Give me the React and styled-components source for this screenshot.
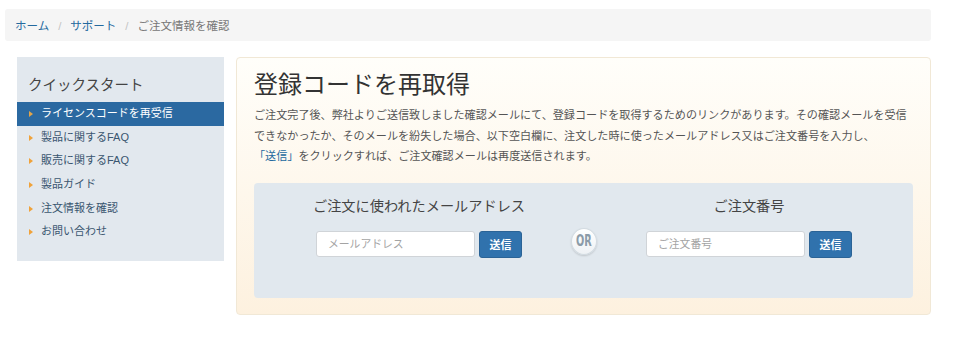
import styled, { createGlobalStyle } from 'styled-components';

const GlobalStyle = createGlobalStyle`
	body {
		margin: 0;
		background: #fff;
		font-family: 'Liberation Sans', 'Noto Sans CJK JP', sans-serif;
		color: #333;
	}
`;

const crumbs = [
	{ label: 'ホーム', link: true },
	{ label: 'サポート', link: true },
	{ label: 'ご注文情報を確認', link: false },
];

const menu = [
	'ライセンスコードを再受信',
	'製品に関するFAQ',
	'販売に関するFAQ',
	'製品ガイド',
	'注文情報を確認',
	'お問い合わせ',
];

const forms = [
	{ title: 'ご注文に使われたメールアドレス', placeholder: 'メールアドレス' },
	{ title: 'ご注文番号', placeholder: 'ご注文番号' },
];

function LookupForm({ title, placeholder }) {
	return (
		<FormCol>
			<FormTitle>{title}</FormTitle>
			<InputRow>
				<Input placeholder={placeholder} />
				<SendButton>送信</SendButton>
			</InputRow>
		</FormCol>
	);
}

export default function App() {
	return (
		<Page>
			<GlobalStyle />
			<Breadcrumb>
				{crumbs.map((c, i) => (
					<Crumb key={c.label} $link={c.link}>
						{i > 0 && <Sep>/</Sep>}
						{c.label}
					</Crumb>
				))}
			</Breadcrumb>
			<Body>
				<Sidebar>
					<SideTitle>クイックスタート</SideTitle>
					<Menu>
						{menu.map((m, i) => (
							<MenuItem key={m} $active={i === 0}>
								{m}
							</MenuItem>
						))}
					</Menu>
				</Sidebar>
				<Panel>
					<Title>登録コードを再取得</Title>
					<Intro>
						ご注文完了後、弊社よりご送信致しました確認メールにて、登録コードを取得するためのリンクがあります。その確認メールを受信できなかったか、そのメールを紛失した場合、以下空白欄に、注文した時に使ったメールアドレス又はご注文番号を入力し、<IntroLink>「送信」</IntroLink>をクリックすれば、ご注文確認メールは再度送信されます。
					</Intro>
					<FormBox>
						<LookupForm {...forms[0]} />
						<OrCol>
							<OrBadge>
								<OrText>OR</OrText>
							</OrBadge>
						</OrCol>
						<LookupForm {...forms[1]} />
					</FormBox>
				</Panel>
			</Body>
		</Page>
	);
}

const Page = styled.div`
	width: 960px;
	padding-top: 9px;
`;

const Breadcrumb = styled.div`
	display: flex;
	align-items: center;
	box-sizing: border-box;
	margin-left: 5px;
	width: 926px;
	height: 32px;
	padding: 0 10px;
	background: #f5f5f5;
	border-radius: 3px;
	font-size: 11.5px;
`;

const Crumb = styled.span`
	color: ${(p) => (p.$link ? '#23699e' : '#777')};
`;

const Sep = styled.span`
	color: #c4c4c4;
	padding: 0 9px;
`;

const Body = styled.div`
	display: flex;
	align-items: flex-start;
	gap: 12px;
	margin: 16px 0 0 17px;
`;

const Sidebar = styled.div`
	width: 207px;
	background: #e2e8ee;
	padding: 18px 0 17px;
`;

const SideTitle = styled.div`
	font-size: 14.5px;
	line-height: 20px;
	color: #444;
	padding-left: 11px;
	margin-bottom: 7px;
`;

const Menu = styled.ul`
	list-style: none;
	margin: 0;
	padding: 0;
`;

const MenuItem = styled.li`
	position: relative;
	height: 23.7px;
	line-height: 23.7px;
	padding-left: 24px;
	font-size: 11px;
	color: ${(p) => (p.$active ? '#fff' : '#3a5670')};
	background: ${(p) => (p.$active ? '#2b69a1' : 'transparent')};

	&::before {
		content: '';
		position: absolute;
		left: 12px;
		top: 50%;
		margin-top: -3px;
		border-left: 4px solid ${(p) => (p.$active ? '#e2a54a' : '#f0a23a')};
		border-top: 3px solid transparent;
		border-bottom: 3px solid transparent;
	}
`;

const Panel = styled.div`
	box-sizing: border-box;
	width: 695px;
	padding: 12px 17px 16px;
	border: 1px solid #f1e8d6;
	border-radius: 4px;
	background: linear-gradient(to bottom, #fffefa 0%, #fdf1df 100%);
`;

const Title = styled.h1`
	margin: 0;
	font-size: 24px;
	font-weight: 400;
	line-height: 29px;
	color: #333;
`;

const Intro = styled.p`
	margin: 6px 0 0;
	font-size: 11.1px;
	line-height: 20.5px;
	color: #555;
`;

const IntroLink = styled.span`
	color: #23699e;
`;

const FormBox = styled.div`
	display: grid;
	grid-template-columns: 1fr 26px 1fr;
	margin-top: 16px;
	padding: 13px 12px 40px 13px;
	background: #e1e8ee;
	border-radius: 4px;
`;

const FormCol = styled.div`
	display: flex;
	flex-direction: column;
	align-items: center;
`;

const FormTitle = styled.div`
	font-size: 14.2px;
	line-height: 20px;
	color: #444;
`;

const InputRow = styled.div`
	display: flex;
	gap: 4px;
	margin-top: 15px;
`;

const Input = styled.input`
	box-sizing: border-box;
	width: 159px;
	height: 26px;
	padding: 0 11px;
	border: 1px solid #d0d4d8;
	border-radius: 3px;
	background: #fff;
	font-family: inherit;
	font-size: 10.8px;
	color: #555;

	&::placeholder {
		color: #a4a4a4;
	}
`;

const SendButton = styled.button`
	box-sizing: border-box;
	width: 43px;
	height: 27px;
	border: 1px solid #2a6396;
	border-radius: 3px;
	background: #3072ad;
	color: #fff;
	font-family: inherit;
	font-size: 11px;
	font-weight: 700;
	padding: 0;
`;

const OrCol = styled.div`
	display: flex;
	justify-content: center;
	padding-top: 32px;
`;

const OrBadge = styled.div`
	box-sizing: border-box;
	width: 27px;
	height: 27px;
	border-radius: 50%;
	border: 1px solid #d3dbe1;
	background: linear-gradient(to bottom, #ffffff, #eef2f5);
	box-shadow: 0 1px 2px rgba(0, 0, 0, 0.15);
	display: flex;
	align-items: center;
	justify-content: center;
`;

const OrText = styled.span`
	display: inline-block;
	font-family: 'DejaVu Sans Condensed', 'Liberation Sans Narrow', sans-serif;
	font-size: 15px;
	font-weight: 700;
	color: #8b9ba8;
	transform: scaleX(0.72);
`;
